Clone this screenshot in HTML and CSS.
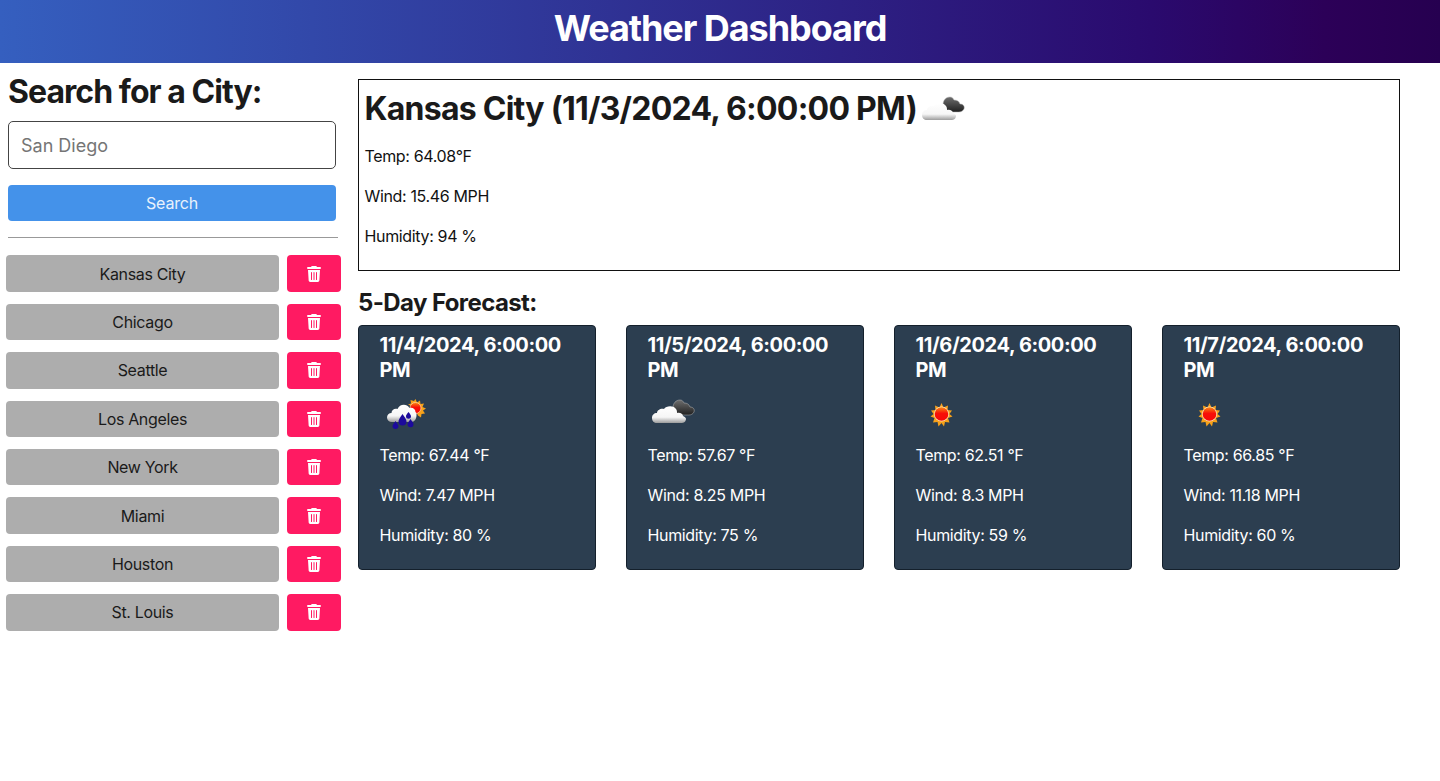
FILE: index.html
```html
<!DOCTYPE html>
<html lang="en">
<head>
  <meta charset="UTF-8">
  <meta name="viewport" content="width=device-width, initial-scale=1.0">
  <title>Weather Dashboard</title>
  <link rel="stylesheet" href="styles.css">
</head>
<body>

  <svg class="defs" width="0" height="0" aria-hidden="true">
    <defs>
      <linearGradient id="white-cloud" x1="0" y1="0" x2="0" y2="1">
        <stop offset="0" stop-color="#ffffff"/>
        <stop offset="0.65" stop-color="#f6f6f6"/>
        <stop offset="1" stop-color="#9c9c9c"/>
      </linearGradient>
      <linearGradient id="dark-cloud" x1="0" y1="0" x2="0" y2="1">
        <stop offset="0" stop-color="#6e6e6e"/>
        <stop offset="1" stop-color="#202020"/>
      </linearGradient>
      <linearGradient id="sun-core" x1="0" y1="0" x2="0" y2="1">
        <stop offset="0" stop-color="#f98a10"/>
        <stop offset="0.45" stop-color="#f81008"/>
        <stop offset="1" stop-color="#f80808"/>
      </linearGradient>
      <symbol id="icon-clouds" viewBox="0 0 50 50">
        <path d="M25 22c0-5 3-8 7-8 2 0 3 1 4 3 3 0 5 1 6 4 3 0 5 2 4 5-1 2-3 3-5 3H30z" fill="url(#dark-cloud)" stroke="#b5b5b5" stroke-width=".5"/>
        <path d="M9 37c-3 0-5-2-5-5s2-5 5-5c0-3 4-5 7-4 2-3 9-4 12 0 1 1 1 3 1 4 3-1 6 1 6 3 2 1 3 2 3 3s-1 4-4 4z" fill="url(#white-cloud)"/>
      </symbol>
      <symbol id="icon-rain" viewBox="0 0 50 50">
        <path d="M35.500 13l1.500 3.500 3-2 .5 3.500 3.500-.5-1.500 3.500 3.500 1.500-3 2 2 3-3.500.5-.5 3.500-3-2-4-8-6-3 3-1-.5-3.500 3.500 1z" fill="#f7a11a"/>
        <circle cx="35.500" cy="22" r="5.500" fill="url(#sun-core)" stroke="#ffe9c8" stroke-width=".6"/>
        <path d="M12 36c-3 0-5-2-5-4.500s2-4.500 4.500-4.500c0-3 3-5 6-4 2-5 9-6 12-1 3-1 6 1 6 4 1 1 1 2 1 3 0 4-2 7-5 7z" fill="url(#white-cloud)"/>
        <path d="M15.500 35c2 3 3 4 3 5a3 3 0 0 1-6 0c0-1 1-2 3-5zM22.500 28c3 4 4 6 4 7.500a4 4 0 0 1-8 0c0-1.500 1-3.500 4-7.500zM28.500 26c1.500 2 2.500 3 2.500 4.200a2.500 2.500 0 0 1-5 0c0-1.200 1-2.200 2.500-4.200zM30.500 33c2 3 3 4 3 5.200a3 3 0 0 1-6 0c0-1.200 1-2.200 3-5.200z" fill="#1c0a9c"/>
      </symbol>
      <symbol id="icon-sun" viewBox="0 0 50 50">
        <path d="M25.500 17l2 4.500 4.500-2-.5 4.500 4.500.5-2.500 3.500 3 2.500-4.500 1.500 1.500 4.500-4.500-.5-1 4.500-2.500-3.500-3 3.500-1-4.500-4.500.5 1.500-4.500-4-1.500 3-2.500-2.500-3.500 4.500-.5-.5-4.500 4.500 2z" fill="#f7a11a"/>
        <circle cx="25.500" cy="28" r="7.500" fill="#fbe3b8"/>
        <circle cx="25.500" cy="28" r="6.800" fill="url(#sun-core)"/>
      </symbol>
      <symbol id="icon-trash" viewBox="0 0 448 512">
        <path fill="currentColor" d="M135 18 128 32H32a32 32 0 0 0 0 64h384a32 32 0 0 0 0-64h-96l-7-14C308 7 297 0 284 0H164c-12 0-23 7-29 18zM416 128H32l21 339c2 25 23 45 48 45h246c25 0 46-20 48-45zM144 192c9 0 16 7 16 16v224a16 16 0 0 1-32 0V208c0-9 7-16 16-16zm80 0c9 0 16 7 16 16v224a16 16 0 0 1-32 0V208c0-9 7-16 16-16zm80 0c9 0 16 7 16 16v224a16 16 0 0 1-32 0V208c0-9 7-16 16-16z"/>
      </symbol>
    </defs>
  </svg>

  <header class="site-header">
    <h1>Weather Dashboard</h1>
  </header>

  <div class="page">
    <aside class="sidebar">
      <h2 class="search-title">Search for a City:</h2>
      <input class="city-input" type="text" placeholder="San Diego">
      <button class="search-btn">Search</button>
      <hr class="divider">

      <div class="history">
        <div class="history-row">
          <button class="city-btn">Kansas City</button>
          <button class="delete-btn"><svg class="trash"><use href="#icon-trash"/></svg></button>
        </div>
        <div class="history-row">
          <button class="city-btn">Chicago</button>
          <button class="delete-btn"><svg class="trash"><use href="#icon-trash"/></svg></button>
        </div>
        <div class="history-row">
          <button class="city-btn">Seattle</button>
          <button class="delete-btn"><svg class="trash"><use href="#icon-trash"/></svg></button>
        </div>
        <div class="history-row">
          <button class="city-btn">Los Angeles</button>
          <button class="delete-btn"><svg class="trash"><use href="#icon-trash"/></svg></button>
        </div>
        <div class="history-row">
          <button class="city-btn">New York</button>
          <button class="delete-btn"><svg class="trash"><use href="#icon-trash"/></svg></button>
        </div>
        <div class="history-row">
          <button class="city-btn">Miami</button>
          <button class="delete-btn"><svg class="trash"><use href="#icon-trash"/></svg></button>
        </div>
        <div class="history-row">
          <button class="city-btn">Houston</button>
          <button class="delete-btn"><svg class="trash"><use href="#icon-trash"/></svg></button>
        </div>
        <div class="history-row">
          <button class="city-btn">St. Louis</button>
          <button class="delete-btn"><svg class="trash"><use href="#icon-trash"/></svg></button>
        </div>
      </div>
    </aside>

    <main class="content">
      <section class="current">
        <h2 class="current-title">Kansas City (11/3/2024, 6:00:00 PM) <svg class="current-icon"><use href="#icon-clouds"/></svg></h2>
        <p>Temp: 64.08°F</p>
        <p>Wind: 15.46 MPH</p>
        <p>Humidity: 94 %</p>
      </section>

      <h3 class="forecast-title">5-Day Forecast:</h3>
      <div class="forecast">
        <div class="card">
          <h4>11/4/2024, 6:00:00 PM</h4>
          <svg class="card-icon"><use href="#icon-rain"/></svg>
          <p>Temp: 67.44 °F</p>
          <p>Wind: 7.47 MPH</p>
          <p>Humidity: 80 %</p>
        </div>
        <div class="card">
          <h4>11/5/2024, 6:00:00 PM</h4>
          <svg class="card-icon"><use href="#icon-clouds"/></svg>
          <p>Temp: 57.67 °F</p>
          <p>Wind: 8.25 MPH</p>
          <p>Humidity: 75 %</p>
        </div>
        <div class="card">
          <h4>11/6/2024, 6:00:00 PM</h4>
          <svg class="card-icon"><use href="#icon-sun"/></svg>
          <p>Temp: 62.51 °F</p>
          <p>Wind: 8.3 MPH</p>
          <p>Humidity: 59 %</p>
        </div>
        <div class="card">
          <h4>11/7/2024, 6:00:00 PM</h4>
          <svg class="card-icon"><use href="#icon-sun"/></svg>
          <p>Temp: 66.85 °F</p>
          <p>Wind: 11.18 MPH</p>
          <p>Humidity: 60 %</p>
        </div>
      </div>
    </main>
  </div>

</body>
</html>
```

FILE: styles.css
```css
* {
  box-sizing: border-box;
}
body {
  margin: 0;
  font-family: Inter, "Noto Sans", sans-serif;
  font-size: 16px;
  line-height: 24px;
  letter-spacing: -0.35px;
  color: #111;
  background: #fff;
}
.defs {
  display: block;
  height: 0;
}
.site-header {
  height: 63px;
  display: flex;
  align-items: center;
  justify-content: center;
  padding-bottom: 8px;
  background: linear-gradient(to right, #355fbf, #2a0a6e 80%, #2c0058 92%, #260050);
}
.site-header h1 {
  margin: 0;
  font-size: 36px;
  font-weight: 700;
  letter-spacing: -1.05px;
  color: #fff;
  line-height: 1;
}
.page {
  display: flex;
  padding-right: 40px;
}
.sidebar {
  width: 358px;
  flex: none;
  padding: 11px 17px 0 6px;
}
.search-title {
  margin: 0 0 11px 2px;
  font-size: 32px;
  line-height: 36px;
  font-weight: 700;
  letter-spacing: -0.95px;
  color: #1a1a1a;
}
.city-input {
  display: block;
  width: 328px;
  height: 48px;
  margin-left: 2px;
  padding: 0 12px;
  border: 1px solid #444;
  border-radius: 5px;
  font: 18px Inter, sans-serif;
}
.city-input::placeholder {
  color: #757575;
}
.search-btn {
  display: block;
  width: 328px;
  height: 36px;
  margin: 16px 0 16px 2px;
  border: none;
  border-radius: 4px;
  background: #4492ea;
  color: #e8f1fc;
  font: 16px Inter, sans-serif;
  letter-spacing: -0.2px;
}
.divider {
  width: 330px;
  height: 1px;
  margin: 0 0 17.4px 2px;
  border: none;
  background: #999;
}
.history-row {
  display: flex;
  gap: 8px;
  margin-bottom: 12px;
  height: 36.4px;
}
.city-btn {
  width: 273px;
  border: none;
  border-radius: 4px;
  background: #adadad;
  color: #1a1a1a;
  font: 16px Inter, sans-serif;
  letter-spacing: -0.35px;
}
.delete-btn {
  width: 54px;
  display: flex;
  align-items: center;
  justify-content: center;
  border: none;
  border-radius: 4px;
  background: #ff1a62;
  color: #fff;
}
.trash {
  width: 14px;
  height: 16px;
}
.content {
  flex: 1;
  padding-top: 16px;
}
.current {
  height: 192px;
  padding: 8px 5.5px 6px;
  border: 1px solid #111;
}
.current-title {
  display: flex;
  align-items: center;
  gap: 1px;
  margin: 0 0 14px;
  font-size: 32px;
  line-height: 42px;
  font-weight: 700;
  letter-spacing: -0.75px;
  color: #1a1a1a;
}
.current-icon {
  width: 50px;
  height: 50px;
  margin: -9px 0 -7px;
}
.current p {
  margin: 0 0 16px;
}
.forecast-title {
  margin: 19px 0 9px;
  font-size: 24px;
  line-height: 26px;
  font-weight: 700;
  letter-spacing: -0.6px;
  color: #1a1a1a;
}
.forecast {
  display: flex;
  justify-content: space-between;
}
.card {
  width: 238px;
  height: 245px;
  padding: 7px 20.5px;
  border: 1px solid #14202c;
  border-radius: 4px;
  background: #2c3e50;
  color: #fff;
}
.card h4 {
  margin: 0;
  font-size: 20px;
  line-height: 25px;
  font-weight: 700;
  letter-spacing: -0.4px;
}
.card-icon {
  display: block;
  width: 50px;
  height: 50px;
  margin: 3px 0 7px;
}
.card p {
  margin: 0 0 16px;
}
```
